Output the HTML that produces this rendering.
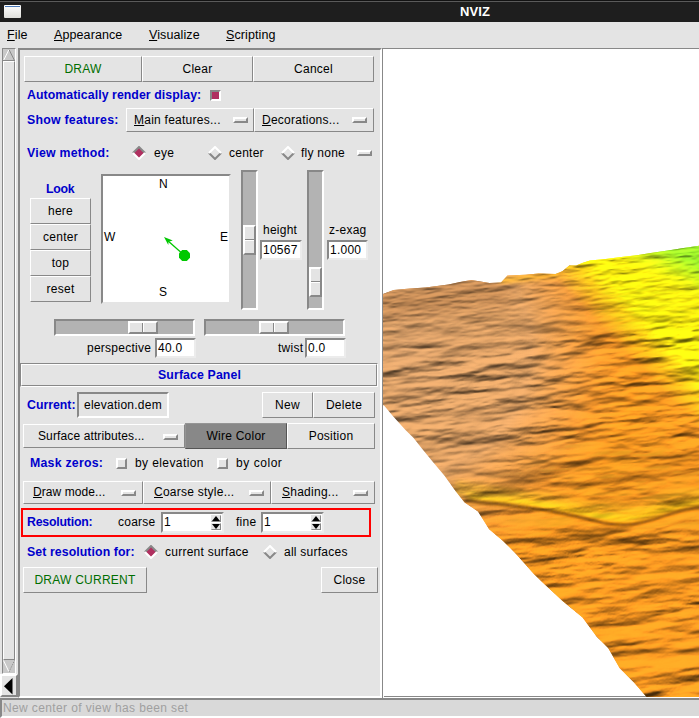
<!DOCTYPE html>
<html><head><meta charset="utf-8">
<style>
*{margin:0;padding:0;box-sizing:border-box}
html,body{width:699px;height:718px;overflow:hidden;background:#e4e4e4;font-family:"Liberation Sans",sans-serif;font-size:12px;color:#000;position:relative;letter-spacing:0.25px}
.a{position:absolute}
.t{position:absolute;white-space:nowrap;line-height:14px;height:14px}
.b{font-weight:bold;color:#0000cc}
.btn{position:absolute;border-style:solid;border-width:1px;border-color:#fff #888 #888 #fff;background:#e4e4e4}
.sunk{position:absolute;border-style:solid;border-width:2px;border-color:#888 #ececec #ececec #888}
.u{text-decoration:underline;text-underline-offset:1px}
.hdl{position:absolute;border-style:solid;border-width:2px;border-color:#fff #888 #888 #fff;background:#e4e4e4}
.ind{position:absolute;width:15px;height:6px;border-style:solid;border-width:2px;border-color:#fff #888 #888 #fff;background:#e4e4e4}
</style></head><body>
<!-- title bar -->
<div class="a" style="left:0;top:0;width:699px;height:22px;background:#1e1e1e"></div>
<div class="a" style="left:0;top:0;width:699px;height:1px;background:#121212"></div>
<div class="a" style="left:0;top:1px;width:699px;height:1px;background:#5a5a5a"></div>
<div class="a" style="left:4px;top:5px;width:17px;height:13px;background:linear-gradient(#fff,#e0e0dc);border-radius:1px"></div>
<div class="a" style="left:5px;top:6px;width:15px;height:1px;background:#4a78b8"></div>
<div class="t" style="left:460px;top:5px;color:#fff;font-weight:bold;font-size:13px;letter-spacing:0.1px">NVIZ</div>

<!-- menu bar -->
<div class="t" style="left:7px;top:28px;font-size:12.5px;letter-spacing:0.1px"><span class="u">F</span>ile</div>
<div class="t" style="left:54px;top:28px;font-size:12.5px;letter-spacing:0.1px"><span class="u">A</span>ppearance</div>
<div class="t" style="left:149px;top:28px;font-size:12.5px;letter-spacing:0.1px"><span class="u">V</span>isualize</div>
<div class="t" style="left:226px;top:28px;font-size:12.5px;letter-spacing:0.1px"><span class="u">S</span>cripting</div>

<!-- left scrollbar -->
<div class="a" style="left:2px;top:48px;width:14px;height:626px;background:#c8c8c8;border-style:solid;border-width:1px;border-color:#888 #fff #fff #888"></div>
<div class="btn" style="left:3px;top:61px;width:12px;height:599px"></div>
<svg class="a" style="left:3px;top:49px" width="12" height="12"><polyline points="0.5,11.5 6,0.5" stroke="#fff" fill="none"/><polyline points="6,0.5 11.5,11.5" stroke="#888" fill="none"/><line x1="0" y1="11.5" x2="12" y2="11.5" stroke="#888"/></svg>
<svg class="a" style="left:3px;top:660px" width="12" height="13"><polyline points="0.5,0.5 6,12" stroke="#fff" fill="none"/><polyline points="6,12 11.5,0.5" stroke="#888" fill="none" stroke-dasharray="1,1"/></svg>
<!-- collapse arrow button -->
<div class="a" style="left:0;top:674px;width:18px;height:23px;border-style:solid;border-width:2px;border-color:#fff #888 #888 #fff;background:#e4e4e4"></div>
<svg class="a" style="left:4px;top:678px" width="9" height="17"><polygon points="8.5,0 8.5,16.5 0,8.25" fill="#000"/></svg>

<!-- main panel -->
<div class="a" style="left:18px;top:48px;width:364px;height:650px;border-style:solid;border-width:2px;border-color:#888 #fff #fff #888"></div>


<!-- ===== panel content ===== -->
<div class="btn" style="left:24px;top:56px;width:118px;height:26px;text-align:center;line-height:24px;color:#006e00">DRAW</div>
<div class="btn" style="left:142px;top:56px;width:111px;height:26px;text-align:center;line-height:24px">Clear</div>
<div class="btn" style="left:253px;top:56px;width:121px;height:26px;text-align:center;line-height:24px">Cancel</div>

<div class="t b" style="left:27px;top:88px;font-size:12.3px;letter-spacing:0.07px">Automatically render display:</div>
<div class="a" style="left:210px;top:90px;width:11px;height:11px;border-style:solid;border-width:2px;border-color:#888 #fff #fff #888;background:#b03060"></div>

<div class="t b" style="left:27px;top:113px;font-size:12.3px">Show features:</div>
<div class="btn" style="left:126px;top:108px;width:128px;height:24px"></div>
<div class="t" style="left:134px;top:113px"><span class="u">M</span>ain features...</div>
<div class="ind" style="left:233px;top:117px"></div>
<div class="btn" style="left:254px;top:108px;width:120px;height:24px"></div>
<div class="t" style="left:262px;top:113px"><span class="u">D</span>ecorations...</div>
<div class="ind" style="left:352px;top:117px"></div>

<div class="t b" style="left:27px;top:146px;font-size:12.3px">View method:</div>
<svg class="a" style="left:132px;top:146px" width="14" height="14"><polygon points="7,1 13,7 7,13 1,7" fill="#b03060"/><polyline points="1,7 7,1 13,7" fill="none" stroke="#888" stroke-width="2"/><polyline points="1,7 7,13 13,7" fill="none" stroke="#fff" stroke-width="2"/></svg>
<div class="t" style="left:154px;top:146px">eye</div>
<svg class="a" style="left:208px;top:146px" width="14" height="14"><polyline points="1,7 7,13 13,7" fill="none" stroke="#888" stroke-width="2"/><polyline points="1,7 7,1 13,7" fill="none" stroke="#fff" stroke-width="2"/></svg>
<div class="t" style="left:229px;top:146px">center</div>
<svg class="a" style="left:281px;top:146px" width="14" height="14"><polyline points="1,7 7,13 13,7" fill="none" stroke="#888" stroke-width="2"/><polyline points="1,7 7,1 13,7" fill="none" stroke="#fff" stroke-width="2"/></svg>
<div class="t" style="left:301px;top:146px">fly none</div>
<div class="ind" style="left:357px;top:150px"></div>

<!-- look -->
<div class="t b" style="left:46px;top:182px;font-size:12.3px;letter-spacing:-0.3px">Look</div>
<div class="btn" style="left:30px;top:198px;width:61px;height:26px;text-align:center;line-height:24px">here</div>
<div class="btn" style="left:30px;top:224px;width:61px;height:26px;text-align:center;line-height:24px">center</div>
<div class="btn" style="left:30px;top:250px;width:61px;height:26px;text-align:center;line-height:24px">top</div>
<div class="btn" style="left:30px;top:276px;width:61px;height:26px;text-align:center;line-height:24px">reset</div>

<!-- compass -->
<div class="a" style="left:101px;top:174px;width:130px;height:130px;background:#fff;border-style:solid;border-width:2px;border-color:#888 #e4e4e4 #e4e4e4 #888"></div>
<div class="t" style="left:159px;top:177px">N</div>
<div class="t" style="left:104px;top:230px">W</div>
<div class="t" style="left:220px;top:230px">E</div>
<div class="t" style="left:159px;top:285px">S</div>
<svg class="a" style="left:150px;top:230px" width="45" height="35"><line x1="34.5" y1="25.5" x2="17" y2="10" stroke="#00c800" stroke-width="1.3"/><polygon points="14,7 22.8,10.6 18.5,11.8 18.3,15" fill="#00c800"/><polygon points="32.2,20 36.8,20 40,23.2 40,27.8 36.8,31 32.2,31 29,27.8 29,23.2" fill="#00c800"/></svg>

<!-- vertical sliders -->
<div class="a" style="left:241px;top:170px;width:17px;height:140px;background:#b3b3b3;border-style:solid;border-width:2px;border-color:#888 #fff #fff #888"></div>
<div class="hdl" style="left:243px;top:225px;width:13px;height:30px"></div>
<div class="a" style="left:245px;top:239px;width:9px;height:1px;background:#888"></div><div class="a" style="left:245px;top:240px;width:9px;height:1px;background:#fff"></div>
<div class="t" style="left:263px;top:223px">height</div>
<div class="sunk" style="left:260px;top:240px;width:42px;height:20px;background:#fff"></div>
<div class="t" style="left:263px;top:243px">10567</div>

<div class="a" style="left:307px;top:170px;width:17px;height:140px;background:#b3b3b3;border-style:solid;border-width:2px;border-color:#888 #fff #fff #888"></div>
<div class="hdl" style="left:309px;top:267px;width:13px;height:30px"></div>
<div class="a" style="left:311px;top:281px;width:9px;height:1px;background:#888"></div><div class="a" style="left:311px;top:282px;width:9px;height:1px;background:#fff"></div>
<div class="t" style="left:329px;top:223px">z-exag</div>
<div class="sunk" style="left:327px;top:240px;width:41px;height:20px;background:#fff"></div>
<div class="t" style="left:330px;top:243px">1.000</div>

<!-- horizontal sliders -->
<div class="a" style="left:54px;top:319px;width:141px;height:17px;background:#b3b3b3;border-style:solid;border-width:2px;border-color:#888 #fff #fff #888"></div>
<div class="hdl" style="left:128px;top:321px;width:30px;height:13px"></div>
<div class="a" style="left:142px;top:323px;width:1px;height:9px;background:#888"></div><div class="a" style="left:143px;top:323px;width:1px;height:9px;background:#fff"></div>
<div class="t" style="left:87px;top:341px">perspective</div>
<div class="sunk" style="left:155px;top:338px;width:41px;height:20px;background:#fff"></div>
<div class="t" style="left:158px;top:341px">40.0</div>

<div class="a" style="left:204px;top:319px;width:141px;height:17px;background:#b3b3b3;border-style:solid;border-width:2px;border-color:#888 #fff #fff #888"></div>
<div class="hdl" style="left:259px;top:321px;width:30px;height:13px"></div>
<div class="a" style="left:273px;top:323px;width:1px;height:9px;background:#888"></div><div class="a" style="left:274px;top:323px;width:1px;height:9px;background:#fff"></div>
<div class="t" style="left:278px;top:341px">twist</div>
<div class="sunk" style="left:305px;top:338px;width:41px;height:20px;background:#fff"></div>
<div class="t" style="left:308px;top:341px">0.0</div>

<!-- surface panel -->
<div class="a" style="left:20px;top:363px;width:358px;height:24px;border-style:solid;border-width:1px;border-color:#888 #fff #fff #888"></div>
<div class="a" style="left:21px;top:364px;width:356px;height:22px;border-style:solid;border-width:1px;border-color:#fff #888 #888 #fff"></div>
<div class="t b" style="left:158px;top:368px;font-size:12.3px;letter-spacing:0.13px">Surface Panel</div>

<div class="t b" style="left:27px;top:398px;font-size:12.3px;letter-spacing:0">Current:</div>
<div class="sunk" style="left:77px;top:392px;width:92px;height:26px;border-color:#888 #fff #fff #888"></div>
<div class="t" style="left:84px;top:398px">elevation.dem</div>
<div class="btn" style="left:262px;top:392px;width:51px;height:26px;text-align:center;line-height:24px">New</div>
<div class="btn" style="left:313px;top:392px;width:62px;height:26px;text-align:center;line-height:24px">Delete</div>

<div class="btn" style="left:23px;top:424px;width:162px;height:24px"></div>
<div class="t" style="left:38px;top:429px;letter-spacing:0.12px">Surface attributes...</div>
<div class="ind" style="left:163px;top:434px"></div>
<div class="btn" style="left:185px;top:423px;width:102px;height:26px;background:#888;border-color:#959595 #555 #555 #959595;text-align:center;line-height:25px">Wire Color</div>
<div class="btn" style="left:287px;top:423px;width:88px;height:26px;text-align:center;line-height:25px">Position</div>

<div class="t b" style="left:30px;top:456px;font-size:12.3px">Mask zeros:</div>
<div class="a" style="left:116px;top:458px;width:11px;height:11px;border-style:solid;border-width:2px;border-color:#fff #888 #888 #fff"></div>
<div class="t" style="left:135px;top:456px;letter-spacing:0.4px">by elevation</div>
<div class="a" style="left:217px;top:458px;width:11px;height:11px;border-style:solid;border-width:2px;border-color:#fff #888 #888 #fff"></div>
<div class="t" style="left:236px;top:456px;letter-spacing:0.55px">by color</div>

<div class="btn" style="left:23px;top:481px;width:120px;height:23px"></div>
<div class="t" style="left:33px;top:485px;letter-spacing:0.08px"><span class="u">D</span>raw mode...</div>
<div class="ind" style="left:121px;top:490px"></div>
<div class="btn" style="left:143px;top:481px;width:128px;height:23px"></div>
<div class="t" style="left:154px;top:485px"><span class="u">C</span>oarse style...</div>
<div class="ind" style="left:249px;top:490px"></div>
<div class="btn" style="left:271px;top:481px;width:104px;height:23px"></div>
<div class="t" style="left:282px;top:485px"><span class="u">S</span>hading...</div>
<div class="ind" style="left:353px;top:490px"></div>

<!-- resolution -->
<div class="a" style="left:21px;top:508px;width:350px;height:29px;border:2px solid #ff0000"></div>
<div class="t b" style="left:27px;top:515px;font-size:12.3px;letter-spacing:-0.2px">Resolution:</div>
<div class="t" style="left:118px;top:515px">coarse</div>
<div class="sunk" style="left:161px;top:512px;width:63px;height:21px;background:#fff"></div>
<div class="t" style="left:164px;top:515px">1</div>
<div class="btn" style="left:211px;top:515px;width:10px;height:7px;border-color:#e4e4e4 #888 #888 #e4e4e4"></div>
<div class="btn" style="left:211px;top:523px;width:10px;height:7px;border-color:#e4e4e4 #888 #888 #e4e4e4"></div>
<svg class="a" style="left:211px;top:515px" width="10" height="15"><polygon points="5,1 9,6 1,6" fill="#000"/><polygon points="1,9 9,9 5,14" fill="#000"/></svg>
<div class="t" style="left:236px;top:515px">fine</div>
<div class="sunk" style="left:261px;top:512px;width:63px;height:21px;background:#fff"></div>
<div class="t" style="left:264px;top:515px">1</div>
<div class="btn" style="left:311px;top:515px;width:10px;height:7px;border-color:#e4e4e4 #888 #888 #e4e4e4"></div>
<div class="btn" style="left:311px;top:523px;width:10px;height:7px;border-color:#e4e4e4 #888 #888 #e4e4e4"></div>
<svg class="a" style="left:311px;top:515px" width="10" height="15"><polygon points="5,1 9,6 1,6" fill="#000"/><polygon points="1,9 9,9 5,14" fill="#000"/></svg>

<div class="t b" style="left:27px;top:545px;font-size:12.3px;letter-spacing:0.09px">Set resolution for:</div>
<svg class="a" style="left:144px;top:545px" width="14" height="14"><polygon points="7,1 13,7 7,13 1,7" fill="#b03060"/><polyline points="1,7 7,1 13,7" fill="none" stroke="#888" stroke-width="2"/><polyline points="1,7 7,13 13,7" fill="none" stroke="#fff" stroke-width="2"/></svg>
<div class="t" style="left:165px;top:545px">current surface</div>
<svg class="a" style="left:263px;top:545px" width="14" height="14"><polyline points="1,7 7,13 13,7" fill="none" stroke="#888" stroke-width="2"/><polyline points="1,7 7,1 13,7" fill="none" stroke="#fff" stroke-width="2"/></svg>
<div class="t" style="left:284px;top:545px">all surfaces</div>

<div class="btn" style="left:23px;top:567px;width:124px;height:26px;text-align:center;line-height:24px;color:#006e00">DRAW CURRENT</div>
<div class="btn" style="left:321px;top:567px;width:57px;height:26px;text-align:center;line-height:24px">Close</div>

<!-- canvas -->
<div class="a" style="left:382px;top:48px;width:317px;height:650px;background:#fff;border-left:1px solid #888;border-top:1px solid #888"></div>
<div class="a" style="left:384px;top:696px;width:315px;height:1px;background:#888"></div>

<!-- terrain -->
<svg class="a" style="left:0;top:0" width="699" height="718" viewBox="0 0 699 718">
<defs>
<clipPath id="tc"><polygon points="383.0,294.0 393.7,290.0 410.0,288.5 425.6,287.5 448.5,284.5 460.0,282.0 471.3,280.0 489.5,283.0 501.0,282.5 507.5,275.6 525.5,274.7 538.4,273.5 555.5,273.9 562.4,271.3 569.3,265.6 576.1,265.6 583.0,262.7 590.0,260.5 605.6,259.0 621.2,257.0 636.8,255.2 652.4,252.8 668.0,250.5 683.6,248.1 699.0,245.8 699.0,697.0 646.6,697.0 633.8,682.3 619.6,668.0 608.2,648.0 596.8,636.7 582.6,617.5 562.6,601.0 542.7,582.6 533.7,573.8 515.9,553.7 502.5,540.4 489.2,529.2 478.0,511.4 464.6,502.5 455.7,491.3 444.6,475.7 433.4,462.4 422.3,449.0 413.4,437.8 405.5,430.0 392.6,415.8 384.5,406.0 383.0,405.0"/></clipPath>
<radialGradient id="g0" gradientUnits="userSpaceOnUse" cx="405.0" cy="350.0" r="230.0">
<stop offset="0" stop-color="#c99462"/><stop offset="0.55" stop-color="#cf955c"/><stop offset="0.85" stop-color="#e88e2a"/><stop offset="1" stop-color="#ee9020"/></radialGradient>
<linearGradient id="gy" gradientUnits="userSpaceOnUse" x1="630.0" y1="357.0" x2="659.0" y2="329.0">
<stop offset="0" stop-color="#f4dc10" stop-opacity="0"/><stop offset="1" stop-color="#faea10" stop-opacity="1"/></linearGradient>
<linearGradient id="gg" gradientUnits="userSpaceOnUse" x1="668" y1="284" x2="682" y2="256">
<stop offset="0" stop-color="#a0e020" stop-opacity="0"/><stop offset="1" stop-color="#98e828" stop-opacity="1"/></linearGradient>
<linearGradient id="gm" gradientUnits="userSpaceOnUse" x1="0" y1="430.0" x2="0" y2="540.0">
<stop offset="0" stop-color="#fff" stop-opacity="0"/><stop offset="1" stop-color="#fff" stop-opacity="1"/></linearGradient>
<linearGradient id="gmc" gradientUnits="userSpaceOnUse" x1="540" y1="290" x2="548" y2="350">
<stop offset="0" stop-color="#fff" stop-opacity="1"/><stop offset="1" stop-color="#fff" stop-opacity="0"/></linearGradient>
<mask id="mkc" maskUnits="userSpaceOnUse" x="370" y="200" width="340" height="520"><rect x="370" y="200" width="340" height="520" fill="url(#gmc)"/></mask>
<mask id="mk" maskUnits="userSpaceOnUse" x="370" y="200" width="340" height="520"><rect x="370" y="200" width="340" height="520" fill="url(#gm)"/></mask>
<filter id="b8" x="-30%" y="-100%" width="160%" height="300%"><feGaussianBlur stdDeviation="8"/></filter>
<filter id="b1" x="-20%" y="-50%" width="140%" height="200%"><feGaussianBlur stdDeviation="1"/></filter>
<filter id="b3" x="-20%" y="-50%" width="140%" height="200%"><feGaussianBlur stdDeviation="2.5"/></filter>
<filter id="rfa" filterUnits="userSpaceOnUse" x="300" y="180" width="500" height="560" color-interpolation-filters="sRGB">
 <feTurbulence type="fractalNoise" baseFrequency="0.014 0.06" numOctaves="3" seed="3" result="n1"/>
 <feTurbulence type="fractalNoise" baseFrequency="0.03 0.14" numOctaves="3" seed="9" result="n2"/>
 <feComposite in="n1" in2="n2" operator="arithmetic" k1="0" k2="0.8" k3="0.3" k4="-0.050" result="n"/>
 <feColorMatrix in="n" type="matrix" values="0 0 0 0 0  0 0 0 0 0  0 0 0 0 0  1 0 0 0 0" result="h"/>
 <feDiffuseLighting in="h" surfaceScale="7.5" diffuseConstant="1" lighting-color="#fff" result="light0">
  <feDistantLight azimuth="260.0" elevation="55.0"/>
 </feDiffuseLighting>
 <feComponentTransfer in="light0" result="light"><feFuncR type="linear" slope="0.750" intercept="0.250"/><feFuncG type="linear" slope="0.750" intercept="0.250"/><feFuncB type="linear" slope="0.750" intercept="0.250"/></feComponentTransfer>
 <feComposite in="SourceGraphic" in2="light" operator="arithmetic" k1="1.215" k2="0" k3="0" k4="0" result="lit"/>
 <feComposite in="lit" in2="SourceAlpha" operator="in"/>
</filter>
<filter id="rfb" filterUnits="userSpaceOnUse" x="300" y="180" width="500" height="560" color-interpolation-filters="sRGB">
 <feTurbulence type="fractalNoise" baseFrequency="0.008 0.032" numOctaves="3" seed="5" result="n1"/>
 <feTurbulence type="fractalNoise" baseFrequency="0.02 0.08" numOctaves="3" seed="13" result="n2"/>
 <feComposite in="n1" in2="n2" operator="arithmetic" k1="0" k2="0.8" k3="0.3" k4="-0.050" result="n"/>
 <feColorMatrix in="n" type="matrix" values="0 0 0 0 0  0 0 0 0 0  0 0 0 0 0  1 0 0 0 0" result="h"/>
 <feDiffuseLighting in="h" surfaceScale="13.0" diffuseConstant="1" lighting-color="#fff" result="light0">
  <feDistantLight azimuth="260.0" elevation="55.0"/>
 </feDiffuseLighting>
 <feComponentTransfer in="light0" result="light"><feFuncR type="linear" slope="0.750" intercept="0.250"/><feFuncG type="linear" slope="0.750" intercept="0.250"/><feFuncB type="linear" slope="0.750" intercept="0.250"/></feComponentTransfer>
 <feComposite in="SourceGraphic" in2="light" operator="arithmetic" k1="1.215" k2="0" k3="0" k4="0" result="lit"/>
 <feComposite in="lit" in2="SourceAlpha" operator="in"/>
</filter>
<filter id="rfc" filterUnits="userSpaceOnUse" x="300" y="180" width="500" height="560" color-interpolation-filters="sRGB">
 <feTurbulence type="fractalNoise" baseFrequency="0.03 0.16" numOctaves="3" seed="7" result="n1"/>
 <feTurbulence type="fractalNoise" baseFrequency="0.06 0.32" numOctaves="3" seed="17" result="n2"/>
 <feComposite in="n1" in2="n2" operator="arithmetic" k1="0" k2="0.8" k3="0.3" k4="-0.050" result="n"/>
 <feColorMatrix in="n" type="matrix" values="0 0 0 0 0  0 0 0 0 0  0 0 0 0 0  1 0 0 0 0" result="h"/>
 <feDiffuseLighting in="h" surfaceScale="2.5" diffuseConstant="1" lighting-color="#fff" result="light0">
  <feDistantLight azimuth="260.0" elevation="55.0"/>
 </feDiffuseLighting>
 <feComponentTransfer in="light0" result="light"><feFuncR type="linear" slope="0.750" intercept="0.250"/><feFuncG type="linear" slope="0.750" intercept="0.250"/><feFuncB type="linear" slope="0.750" intercept="0.250"/></feComponentTransfer>
 <feComposite in="SourceGraphic" in2="light" operator="arithmetic" k1="1.215" k2="0" k3="0" k4="0" result="lit"/>
 <feComposite in="lit" in2="SourceAlpha" operator="in"/>
</filter>
</defs>
<g clip-path="url(#tc)">
<g><g transform="translate(383,291) skewY(-5.0) translate(-383,-291)" filter="url(#rfa)">
<g transform="translate(383,291) skewY(5.0) translate(-383,-291)">
<rect x="370" y="200" width="340" height="520" fill="url(#g0)"/>
<rect x="370" y="200" width="340" height="520" fill="url(#gy)"/>
<rect x="370" y="200" width="340" height="520" fill="url(#gg)"/>
<path d="M375,306 L440,298 L510,290" stroke="#8a5a30" stroke-width="26" fill="none" opacity="0.35" filter="url(#b8)"/>
<path d="M500,281 L540,276 L560,274" stroke="#f0b020" stroke-width="4" fill="none" filter="url(#b3)"/>
<path d="M455,488 C500,494 540,500 600,510 S660,500 705,496" stroke="#f4c020" stroke-width="14" fill="none" opacity="0.4" filter="url(#b3)"/>
<path d="M468,497 C510,500 545,504 595,515 S660,505 705,502" stroke="#f6cc14" stroke-width="5" fill="none" opacity="0.75" filter="url(#b3)"/>
<path d="M465,501 C510,505 545,508 595,521 S660,510 705,507" stroke="#5a3408" stroke-width="2.6" fill="none" opacity="0.9" filter="url(#b1)"/>
</g></g></g>
<g mask="url(#mk)"><g transform="translate(383,291) skewY(-5.0) translate(-383,-291)" filter="url(#rfb)">
<g transform="translate(383,291) skewY(5.0) translate(-383,-291)">
<rect x="370" y="200" width="340" height="520" fill="url(#g0)"/>
<rect x="370" y="200" width="340" height="520" fill="url(#gy)"/>
<rect x="370" y="200" width="340" height="520" fill="url(#gg)"/>
<path d="M375,306 L440,298 L510,290" stroke="#8a5a30" stroke-width="26" fill="none" opacity="0.35" filter="url(#b8)"/>
<path d="M500,281 L540,276 L560,274" stroke="#f0b020" stroke-width="4" fill="none" filter="url(#b3)"/>
<path d="M455,488 C500,494 540,500 600,510 S660,500 705,496" stroke="#f4c020" stroke-width="14" fill="none" opacity="0.4" filter="url(#b3)"/>
<path d="M468,497 C510,500 545,504 595,515 S660,505 705,502" stroke="#f6cc14" stroke-width="5" fill="none" opacity="0.75" filter="url(#b3)"/>
<path d="M465,501 C510,505 545,508 595,521 S660,510 705,507" stroke="#5a3408" stroke-width="2.6" fill="none" opacity="0.9" filter="url(#b1)"/>
</g></g></g>
<g mask="url(#mkc)"><g transform="translate(383,291) skewY(-5.0) translate(-383,-291)" filter="url(#rfc)">
<g transform="translate(383,291) skewY(5.0) translate(-383,-291)">
<rect x="370" y="200" width="340" height="520" fill="url(#g0)"/>
<rect x="370" y="200" width="340" height="520" fill="url(#gy)"/>
<rect x="370" y="200" width="340" height="520" fill="url(#gg)"/>
<path d="M375,306 L440,298 L510,290" stroke="#8a5a30" stroke-width="26" fill="none" opacity="0.35" filter="url(#b8)"/>
<path d="M500,281 L540,276 L560,274" stroke="#f0b020" stroke-width="4" fill="none" filter="url(#b3)"/>
<path d="M455,488 C500,494 540,500 600,510 S660,500 705,496" stroke="#f4c020" stroke-width="14" fill="none" opacity="0.4" filter="url(#b3)"/>
<path d="M468,497 C510,500 545,504 595,515 S660,505 705,502" stroke="#f6cc14" stroke-width="5" fill="none" opacity="0.75" filter="url(#b3)"/>
<path d="M465,501 C510,505 545,508 595,521 S660,510 705,507" stroke="#5a3408" stroke-width="2.6" fill="none" opacity="0.9" filter="url(#b1)"/>
</g></g></g>
</g>
</svg>
<!-- /terrain -->

<!-- status bar -->
<div class="a" style="left:0;top:698px;width:699px;height:20px;background:#d9d9d9;border-style:solid;border-width:2px 0 2px 2px;border-color:#888 #fff #fff #888"></div>
<div class="t" style="left:3px;top:701px;color:#a0a0a0;letter-spacing:0.38px">New center of view has been set</div>

</body></html>
